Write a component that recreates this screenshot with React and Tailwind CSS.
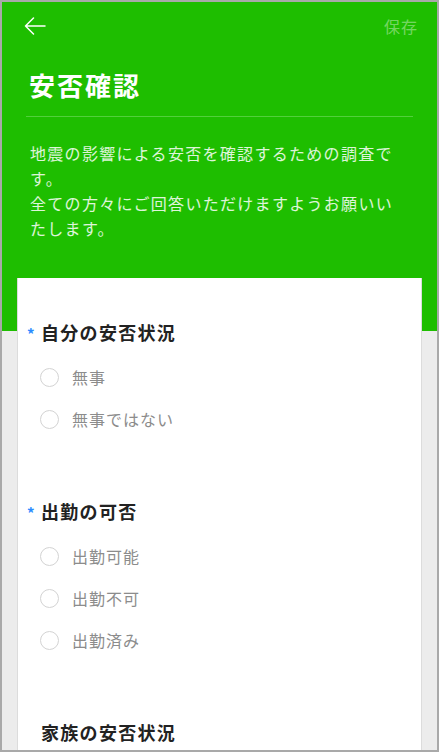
import React from "react";

const font = { fontFamily: '"Noto Sans CJK JP", "Noto Sans", sans-serif' };

function Radio({ label }) {
  return (
    <label className="flex h-[42px] items-center pl-[13px]">
      <span className="h-[19px] w-[19px] rounded-full border-[1.5px] border-[#d3d3d3] bg-white" />
      <span className="ml-[13px] text-[16px] tracking-[1px] text-[#8c8c8c]">{label}</span>
    </label>
  );
}

function Question({ title, required, options }) {
  return (
    <div>
      <h2 className="flex h-[28px] items-center text-[18px] font-bold leading-[28px] tracking-[1.3px] text-[#222]">
        <span className="w-[14px] pt-[3px] text-[15px] font-bold text-[#2b8cff]">{required ? "*" : ""}</span>
        {title}
      </h2>
      {options.length > 0 && (
        <div className="mt-[10px] flex flex-col">
          {options.map((o) => (
            <Radio key={o} label={o} />
          ))}
        </div>
      )}
    </div>
  );
}

export default function App() {
  return (
    <div
      className="h-[752px] w-[439px] overflow-hidden border-2 border-[#a9a9a9] bg-[#ececec]"
      style={font}
    >
      <div className="bg-[#1ebe00] px-6 pb-[90px]">
        <div className="flex h-[48px] items-center justify-between">
          <svg width="22" height="18" viewBox="0 0 22 18" fill="none" className="-ml-[2px]">
            <path d="M21 9H1.5M9.5 1L1.5 9l8 8" stroke="white" strokeWidth="1.5" strokeLinecap="round" strokeLinejoin="round" />
          </svg>
          <span className="-mr-[5px] text-[16px] tracking-[1px] text-white/40">保存</span>
        </div>
        <h1 className="mt-[19px] pl-[3px] text-[26px] font-bold leading-[32px] tracking-[2px] text-white">
          安否確認
        </h1>
        <div className="mt-[15px] h-px bg-[#52d03c]" />
        <div className="mt-[24px] w-[374px] pl-[4px] text-[16px] leading-[25px] tracking-[1.3px] text-white/85">
          <p>地震の影響による安否を確認するための調査です。</p>
          <p>全ての方々にご回答いただけますようお願いいたします。</p>
        </div>
      </div>
      <div className="mx-[15px] -mt-[53px] flex flex-col gap-[57px] border border-t-0 border-[#dcdcdc] bg-white pb-10 pl-[9px] pt-[40px]">
        <Question title="自分の安否状況" required options={["無事", "無事ではない"]} />
        <Question title="出勤の可否" required options={["出勤可能", "出勤不可", "出勤済み"]} />
        <Question title="家族の安否状況" options={[]} />
      </div>
    </div>
  );
}
